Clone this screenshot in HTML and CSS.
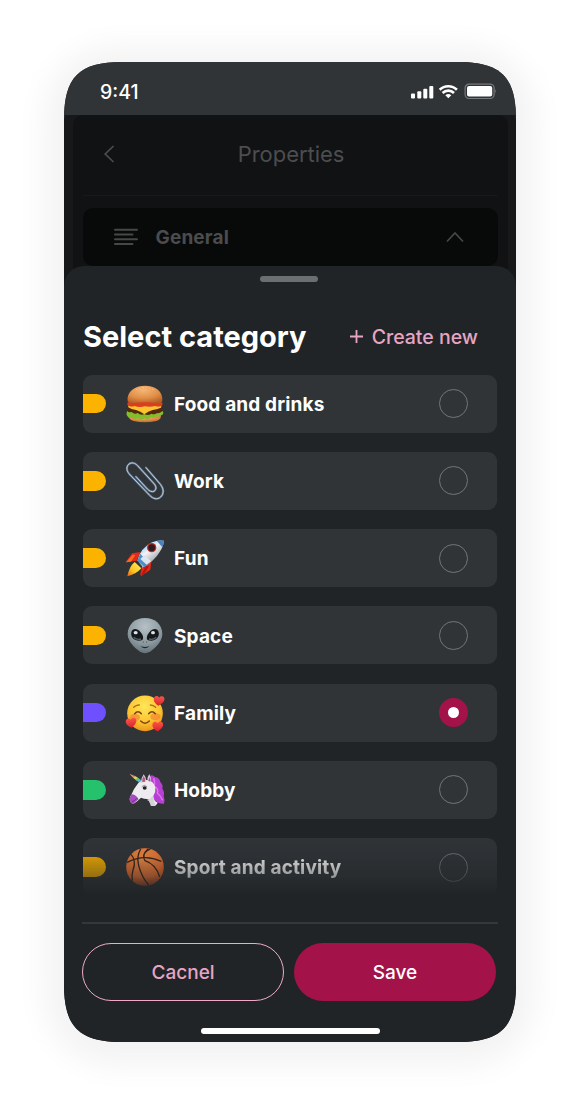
FILE: index.html
```html
<!DOCTYPE html>
<html lang="en">
<head>
<meta charset="utf-8">
<title>Select category</title>
<link rel="stylesheet" href="styles.css">
</head>
<body>
<div class="device">
  <div class="screen">
    <div class="status">
      <span class="time">9:41</span>
      <svg class="status-icons" width="88" height="18" viewBox="0 0 88 18">
        <g fill="#fff">
          <rect x="2" y="11.500" width="4" height="5" rx="1"/>
          <rect x="8.300" y="9.200" width="4" height="7.300" rx="1"/>
          <rect x="14.300" y="6.800" width="4" height="9.700" rx="1"/>
          <rect x="20.300" y="4" width="4" height="12.500" rx="1"/>
        </g>
        <g fill="none" stroke="#fff" stroke-width="2.600">
          <path d="M30.700 7.700a12.300 12.300 0 0 1 17.200 0"/>
          <path d="M33.600 11a8 8 0 0 1 11.400 0"/>
        </g>
        <path d="M39.300 16.300l-3-3q3-2.500 6 0z" fill="#fff"/>
        <rect x="56.100" y="2.100" width="29" height="14.400" rx="4" fill="none" stroke="#777a7c" stroke-width="1.200"/>
        <rect x="58" y="4" width="25.200" height="10.600" rx="2" fill="#fff"/>
        <path d="M86.300 7q1.600 2.300 0 4.600z" fill="#85888a"/>
      </svg>
    </div>
    <div class="backdrop">
      <div class="page">
        <div class="page-head">
          <svg width="12" height="20" viewBox="0 0 12 20" fill="none" stroke="#4b4c4e" stroke-width="1.700"><path d="M10.500 2L2.200 10l8.300 8"/></svg>
          <span class="page-title">Properties</span>
        </div>
        <div class="general">
          <svg width="24" height="18" viewBox="0 0 24 18" stroke="#464747" stroke-width="2" stroke-linecap="round"><path d="M1 1.800h22M1 6.500h17.500M1 11.300h22M1 16h17.500"/></svg>
          <span class="general-label">General</span>
          <svg width="18" height="12" viewBox="0 0 18 12" fill="none" stroke="#464747" stroke-width="1.700"><path d="M1 10.500L9 2l8 8.500"/></svg>
        </div>
      </div>
    </div>
    <div class="sheet">
      <div class="handle"></div>
      <div class="sheet-head">
        <h1 class="title">Select category</h1>
        <div class="create">
          <svg width="13" height="13" viewBox="0 0 13 13" stroke="#e7a5c4" stroke-width="1.800"><path d="M6.500 0v13M0 6.500h13"/></svg>
          <span>Create new</span>
        </div>
      </div>
      <div class="list">
        <div class="row">
          <span class="tag"></span>
          <svg class="emoji" viewBox="0 0 114 114">
            <defs><radialGradient id="bun" cx=".45" cy=".25" r=".8"><stop offset="0" stop-color="#f5b877"/><stop offset=".6" stop-color="#e08d46"/><stop offset="1" stop-color="#b65f24"/></radialGradient></defs>
            <path d="M9 88h95q5 14-12 20-36 8-70 0Q4 102 9 88z" fill="url(#bun)"/>
            <path d="M5 69q52-10 104 0 2 14-6 17-46 12-92 0-8-5-6-17z" fill="#54280f"/>
            <path d="M4 78q4 6 13 3 8 8 18 3 10 8 20 3 12 6 21-1 10 4 17-2 8 2 17-6 5 9-3 12-7 6-14 4-8 8-17 3-10 9-20 3-12 7-20 0-11 5-17-2-12 4-15-5-5-5 0-15z" fill="#82bd2b"/>
            <path d="M11 58h93q4 6 1 10-14 5-25 7-14 4-25 13-11-9-25-13-15-2-23-8-3-5 4-9z" fill="#fcc52d"/>
            <path d="M6 52q50-8 102 0 4 8-2 11-10 3-18 0-16 4-31 1-18 4-31-1-9 3-17 0-9-4-3-11z" fill="#db3c22"/>
            <path d="M5 49C1 20 26 2 57 2s55 17 52 47q-4 6-15 5-37-5-74 0-12 1-15-5z" fill="url(#bun)"/>
            <path d="M30 14q25-13 53 0" fill="none" stroke="#f8c993" stroke-width="3" stroke-dasharray="4 6"/>
          </svg>
          <span class="name">Food and drinks</span><span class="radio"></span>
        </div>
        <div class="row">
          <span class="tag"></span>
          <svg class="emoji" viewBox="0 0 114 114" fill="none" stroke-linecap="round" stroke-linejoin="round">
            <path d="M60 17L104 68C114 82 114 95 104 105C94 114 81 111 71 100L9 35C0 24 1 12 9 6C18 0 27 3 35 11L85 66C92 75 91 83 84 88C77 91 70 87 64 81L30 44" stroke="#62768d" stroke-width="6.500"/>
            <path d="M60 17L104 68C114 82 114 95 104 105C94 114 81 111 71 100L9 35C0 24 1 12 9 6C18 0 27 3 35 11L85 66C92 75 91 83 84 88C77 91 70 87 64 81L30 44" stroke="#bccbda" stroke-width="3"/>
          </svg>
          <span class="name">Work</span><span class="radio"></span>
        </div>
        <div class="row">
          <span class="tag"></span>
          <svg class="emoji" viewBox="0 0 114 114">
            <defs>
              <linearGradient id="hull" x1=".2" y1=".1" x2=".75" y2=".85"><stop offset="0" stop-color="#7dbbec"/><stop offset=".4" stop-color="#f3f5f7"/><stop offset="1" stop-color="#8a929b"/></linearGradient>
              <linearGradient id="flame" x1="1" y1="0" x2="0" y2="1"><stop offset="0" stop-color="#fff06a"/><stop offset=".6" stop-color="#fbc51f"/><stop offset="1" stop-color="#f05a16"/></linearGradient>
            </defs>
            <path d="M44 39L18 43-1 70l33-5z" fill="#e52a15"/>
            <path d="M20 47L0 70l15-2 13-20z" fill="#f66a25"/>
            <path d="M76 68l-3 24-28 20-2-7 8-30z" fill="#e52a15"/>
            <path d="M58 82l-13 28 10-5 14-25z" fill="#b81510"/>
            <path d="M26 69Q10 82 4 112q25-5 42-24z" fill="url(#flame)"/>
            <path d="M34 66Q44 26 78 10 96 2 113 5q0 17-12 34-16 28-53 47z" fill="url(#hull)"/>
            <path d="M42 44l31 29-17 11-22-18z" fill="#4d8fc8"/>
            <path d="M55 48l20 19-13 10-19-17z" fill="#dce5ed"/>
            <path d="M92 5q12-3 21 0 1 10-4 20z" fill="#4a83bb"/>
            <circle cx="77" cy="26" r="14" fill="#c4251d"/>
            <circle cx="77" cy="26" r="10" fill="#281e22"/>
            <path d="M33 67l14 17" stroke="#31363c" stroke-width="5"/>
          </svg>
          <span class="name">Fun</span><span class="radio"></span>
        </div>
        <div class="row">
          <span class="tag"></span>
          <svg class="emoji" viewBox="0 0 114 114">
            <defs><radialGradient id="alien" cx=".5" cy=".25" r=".75"><stop offset="0" stop-color="#b6c1c6"/><stop offset=".65" stop-color="#8b999f"/><stop offset="1" stop-color="#657178"/></radialGradient></defs>
            <path d="M57 6c31 0 52 20 52 49 0 25-29 47-38 53q-14 7-28 0C32 101 5 79 5 55 5 26 26 6 57 6z" fill="url(#alien)"/>
            <path d="M16 49c3-12 17-14 28 0 8 9 10 20 4 24-18 6-36-7-32-24zM98 49c-3-12-17-14-28 0-8 9-10 20-4 24 18 6 36-7 32-24z" fill="#15191b"/>
            <ellipse cx="29" cy="50" rx="6" ry="5" fill="#dce4e8"/><ellipse cx="81" cy="50" rx="6" ry="5" fill="#dce4e8"/>
            <path d="M23 64q11 9 22 5M91 64q-11 9-22 5" fill="none" stroke="#53636c" stroke-width="4"/>
            <path d="M43 89q14 8 28 0-14 15-28 0z" fill="#20282c"/>
            <path d="M52 80v-4M62 80v-4" stroke="#526069" stroke-width="3"/>
          </svg>
          <span class="name">Space</span><span class="radio"></span>
        </div>
        <div class="row">
          <span class="tag purple"></span>
          <svg class="emoji" viewBox="0 0 114 114">
            <defs>
              <radialGradient id="face" cx=".48" cy=".3" r=".7"><stop offset="0" stop-color="#ffe75a"/><stop offset=".65" stop-color="#fdc32f"/><stop offset="1" stop-color="#ed961c"/></radialGradient>
              <linearGradient id="heart" x1="0" y1="0" x2="0" y2="1"><stop offset="0" stop-color="#fb5548"/><stop offset="1" stop-color="#d8232c"/></linearGradient>
              <path id="heart-shape" d="M17 30C6 24-1 16 2 7 5-1 14 0 17 6 21-1 31-1 33 7c2 9-7 17-16 23z" fill="url(#heart)"/>
            </defs>
            <circle cx="57" cy="58" r="53.500" fill="url(#face)"/>
            <ellipse cx="27" cy="70" rx="15" ry="11" fill="#f48132" opacity=".65"/><ellipse cx="88" cy="68" rx="15" ry="11" fill="#f48132" opacity=".65"/>
            <g fill="none" stroke="#7b4514" stroke-width="4.500" stroke-linecap="round"><path d="M26 59q10-12 20 0M68 59q10-12 20 0M44 81q13 13 26 0"/><path d="M23 40q8-8 17-7M73 33q9 0 16 7" stroke="#ac7019" stroke-width="4"/></g>
            <use href="#heart-shape" transform="translate(83 4) rotate(5)"/>
            <use href="#heart-shape" transform="translate(-3 73) rotate(-5)"/>
            <use href="#heart-shape" transform="translate(78 82)"/>
          </svg>
          <span class="name">Family</span><span class="radio on"></span>
        </div>
        <div class="row">
          <span class="tag green"></span>
          <svg class="emoji" viewBox="0 0 114 114">
            <path d="M65 20q12-14 22-2 13 2 16 15 9 8 6 20 8 10 4 22 5 13 1 23-15 3-25-9-18-10-22-31z" fill="#b83fd4"/>
            <path d="M83 21q5 15 1 25 15 6 10 20 9 8 16 22" fill="none" stroke="#dc78ec" stroke-width="4"/>
            <path d="M37 36Q46 25 63 27q20 2 25 22 2 14-6 26 0 14 13 20-5 11-15 10-9-4-12-20Q52 83 45 80q-10 10-20 17-7 3-12-5-5-10 3-21Q23 53 37 36z" fill="#edebf0"/>
            <path d="M17 70q12 0 21 15-10 8-15 13-9 1-12-12 0-9 6-16z" fill="#a74cc0"/>
            <path d="M32 82q-7 10-15 10" fill="none" stroke="#743288" stroke-width="3"/>
            <path d="M79 76q-6 9-17 11 10 1 12 17 7 3 15-1-8-11-7-25z" fill="#d6d0da"/>
            <path d="M44 35q2-15 9-25 8 8 8 22zM64 28q0-11 6-19 7 12 4 23z" fill="#d9c9d5"/>
            <path d="M49 33q0-12 4-18 5 7 4 17z" fill="#ae587b"/><path d="M67 29l4-12 2 15z" fill="#ae587b"/>
            <path d="M38 34l9-6-36-19z" fill="#54b8d4"/><path d="M29 26l7-6-9-5-6 5z" fill="#e4d150"/><path d="M21 20l6-5-16-6z" fill="#e38e64"/><path d="M33 30l9-5-6-5-8 6z" fill="#65c283"/>
            <ellipse cx="56" cy="51" rx="6" ry="5" fill="#27212b"/><path d="M47 47q9-8 16 0" fill="none" stroke="#706576" stroke-width="2"/>
          </svg>
          <span class="name">Hobby</span><span class="radio"></span>
        </div>
        <div class="row fading">
          <span class="tag"></span>
          <svg class="emoji" viewBox="0 0 114 114">
            <defs><radialGradient id="ball" cx=".45" cy=".3" r=".75"><stop offset="0" stop-color="#fb9143"/><stop offset=".65" stop-color="#f17432"/><stop offset="1" stop-color="#c9501f"/></radialGradient></defs>
            <circle cx="57" cy="57" r="56.500" fill="url(#ball)"/>
            <path d="M44 3Q31 25 38 53 47 88 68 111M3 43Q55 16 106 40M67 2Q45 21 57 38 90 49 101 87M15 19Q32 37 21 66 16 82 19 98M73 3Q50 13 54 29" fill="none" stroke="#37251d" stroke-width="4"/>
          </svg>
          <span class="name">Sport and activity</span><span class="radio"></span>
        </div>
      </div>
      <div class="footer">
        <div class="btn outline">Cacnel</div>
        <div class="btn solid">Save</div>
      </div>
      <div class="home"></div>
    </div>
  </div>
</div>
</body>
</html>
```
FILE: styles.css
```css
* { box-sizing: border-box; }
body { margin: 0; padding: 62px 64px 66px; background: #fff; font-family: Inter, "Liberation Sans", sans-serif; }
.device { width: 452px; height: 980px; border-radius: 50px; box-shadow: 0 4px 32px 19px rgba(0, 0, 0, .052); }
.screen {
  width: 452px; height: 980px; display: flex; flex-direction: column; background: #17181a;
  clip-path: path("M58 0H394C437 0 452 15 452 58V922C452 965 437 980 394 980H58C15 980 0 965 0 922V58C0 15 15 0 58 0Z");
}
.status { height: 53px; flex: none; background: #303437; display: flex; justify-content: space-between; align-items: center; padding: 5px 19px 0 36px; }
.time { color: #fff; font-size: 19.500px; font-weight: 500; line-height: 24px; padding-top: 2px; }
.status-icons { flex: none; }
.backdrop { height: 151px; flex: none; padding: 0 8px 0 9px; }
.page { height: 180px; padding: 0 10px; background: #111214; border-radius: 10px 10px 0 0; }
.page-head { height: 81px; display: flex; align-items: center; padding: 0 0 3px 20px; border-bottom: 1px solid #18191b; }
.page-title { flex: 1; text-align: center; padding-right: 31px; font-size: 22px; letter-spacing: -.05px; color: #4c4d4f; }
.general { height: 58px; margin-top: 12px; border-radius: 10px; background: #080a09; display: flex; align-items: center; padding: 0 34px 0 31px; }
.general-label { flex: 1; padding: 1px 0 0 17.500px; font-size: 19px; font-weight: 700; letter-spacing: .15px; color: #4b4c4e; }
.sheet { height: 776px; flex: none; background: #202427; border-radius: 20px 20px 0 0; padding: 9.500px 18px 0 19px; }
.handle { width: 58px; height: 6px; margin: 0 auto 0 177px; border-radius: 4px; background: #6c6f71; }
.sheet-head { height: 93px; display: flex; align-items: center; justify-content: space-between; padding: 17px 20px 0 0; }
.title { margin: 0; padding-top: 1px; font-size: 29px; line-height: 36px; font-weight: 700; color: #fff; }
.create { display: flex; align-items: center; gap: 8.500px; color: #e7a5c4; font-size: 19.500px; line-height: 24px; font-weight: 500; }
.list { display: flex; flex-direction: column; gap: 19.250px; width: 414px; }
.row { height: 58px; flex: none; border-radius: 9px; background: #303437; display: flex; align-items: center; padding-right: 29px; }
.fading {
  -webkit-mask-image: linear-gradient(#000 0, rgba(0, 0, 0, .82) 18px, rgba(0, 0, 0, .54) 38px, transparent 59px);
  mask-image: linear-gradient(#000 0, rgba(0, 0, 0, .82) 18px, rgba(0, 0, 0, .54) 38px, transparent 59px);
}
.tag { width: 23px; height: 19.500px; flex: none; border-radius: 0 10px 10px 0; background: #fbb300; }
.purple { background: #6e50fe; }
.green { background: #25c16d; }
.emoji { width: 38px; height: 38px; flex: none; margin-left: 19.500px; overflow: visible; }
.name { flex: 1; padding: 1.500px 0 0 10.500px; font-size: 19px; font-weight: 700; letter-spacing: .15px; color: #fff; white-space: nowrap; }
.radio { width: 29px; height: 29px; border-radius: 50%; border: 1px solid #737678; flex: none; }
.on { border: 9.500px solid #a3134a; background: #fff; }
.footer { width: 416px; margin: 26px 0 0 -1px; border-top: 2px solid #34383a; padding-top: 19px; display: flex; gap: 9.500px; }
.btn { width: 202.250px; height: 58px; border-radius: 29px; display: flex; align-items: center; justify-content: center; font-size: 19px; font-weight: 500; flex: none; }
.outline { border: 1.500px solid #efaacb; color: #e7a5c4; }
.solid { background: #a3134a; color: #fff; }
.home { width: 179px; height: 6px; border-radius: 3px; background: #fff; margin: 27px auto 0; }
```
